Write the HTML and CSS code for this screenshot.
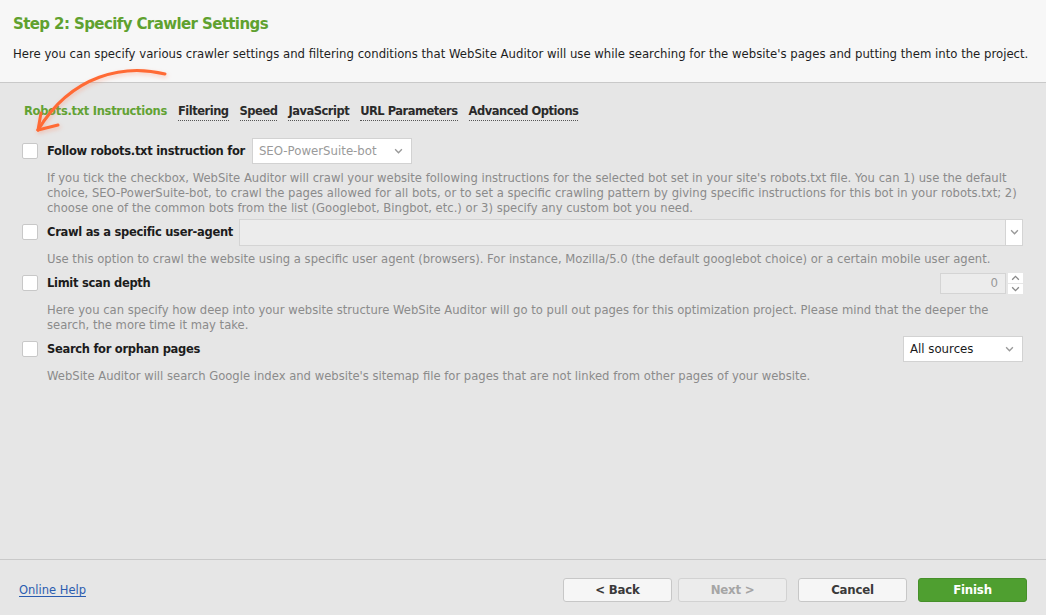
FILE: index.html
```html
<!DOCTYPE html>
<html>
<head>
<meta charset="utf-8">
<link rel="stylesheet" href="styles.css">
</head>
<body>
<div class="window">
  <div class="header">
    <h1 class="title">Step 2: Specify Crawler Settings</h1>
    <p class="intro">Here you can specify various crawler settings and filtering conditions that WebSite Auditor will use while searching for the website's pages and putting them into the project.</p>
  </div>
  <div class="main">
    <div class="tabs">
      <span class="tab active">Robots.txt Instructions</span>
      <span class="tab">Filtering</span>
      <span class="tab">Speed</span>
      <span class="tab">JavaScript</span>
      <span class="tab">URL Parameters</span>
      <span class="tab">Advanced Options</span>
    </div>

    <div class="row">
      <span class="check"></span>
      <span class="label">Follow robots.txt instruction for</span>
      <span class="select bot">SEO-PowerSuite-bot<svg class="chev" viewBox="0 0 8 5"><path d="M1 1l3 3 3-3" /></svg></span>
    </div>
    <p class="desc">If you tick the checkbox, WebSite Auditor will crawl your website following instructions for the selected bot set in your site's robots.txt file. You can 1) use the default choice, SEO-PowerSuite-bot, to crawl the pages allowed for all bots, or to set a specific crawling pattern by giving specific instructions for this bot in your robots.txt; 2) choose one of the common bots from the list (Googlebot, Bingbot, etc.) or 3) specify any custom bot you need.</p>

    <div class="row">
      <span class="check"></span>
      <span class="label">Crawl as a specific user-agent</span>
      <span class="agent"></span>
      <span class="dropbtn"><svg class="chev" viewBox="0 0 8 5"><path d="M1 1l3 3 3-3" /></svg></span>
    </div>
    <p class="desc">Use this option to crawl the website using a specific user agent (browsers). For instance, Mozilla/5.0 (the default googlebot choice) or a certain mobile user agent.</p>

    <div class="row">
      <span class="check"></span>
      <span class="label">Limit scan depth</span>
      <span class="spacer"></span>
      <span class="depth">0</span>
      <span class="spin">
        <svg viewBox="0 0 12 9"><path d="M3 6l3-3 3 3" /></svg>
        <svg viewBox="0 0 12 9"><path d="M3 3l3 3 3-3" /></svg>
      </span>
    </div>
    <p class="desc">Here you can specify how deep into your website structure WebSite Auditor will go to pull out pages for this optimization project. Please mind that the deeper the search, the more time it may take.</p>

    <div class="row">
      <span class="check"></span>
      <span class="label">Search for orphan pages</span>
      <span class="spacer"></span>
      <span class="select sources">All sources<svg class="chev" viewBox="0 0 8 5"><path d="M1 1l3 3 3-3" /></svg></span>
    </div>
    <p class="desc">WebSite Auditor will search Google index and website's sitemap file for pages that are not linked from other pages of your website.</p>
  </div>
  <div class="footer">
    <a class="help" href="#">Online Help</a>
    <div class="buttons">
      <span class="btn">&lt; Back</span>
      <span class="btn disabled">Next &gt;</span>
      <span class="btn cancel">Cancel</span>
      <span class="btn finish">Finish</span>
    </div>
  </div>
  <svg class="arrow" viewBox="0 0 200 150" width="200" height="150">
    <path d="M165 74 C 125 64, 72 74, 38 130" />
    <path d="M38 130 L 58 125" />
    <path d="M38 130 L 41 113" />
  </svg>
</div>
</body>
</html>
```
FILE: styles.css
```css
* { box-sizing: border-box; }
html, body { margin: 0; padding: 0; }
body {
  width: 1046px;
  height: 615px;
  overflow: hidden;
  font-family: "DejaVu Sans", "Liberation Sans", sans-serif;
  color: #222;
  background: #e6e6e6;
}
.window {
  position: relative;
  display: flex;
  flex-direction: column;
  height: 615px;
}
.header {
  height: 83px;
  background: #f7f7f7;
  border-bottom: 1px solid #c9c9c9;
  padding: 13px 13px 0;
}
.title {
  margin: 0;
  font-size: 15px;
  letter-spacing: -0.6px;
  line-height: 22px;
  font-weight: bold;
  color: #5fa12f;
}
.intro {
  margin: 11px 0 0;
  font-size: 11.7px;
  line-height: 16px;
  color: #1e1e1e;
  white-space: nowrap;
}
.main {
  flex: 1;
  padding: 21px 23px 0 22px;
}
.tabs {
  display: flex;
  gap: 11px;
  height: 16px;
  font-size: 11.5px;
  letter-spacing: -0.5px;
  font-weight: bold;
  margin-bottom: 18px;
  padding-left: 2px;
}
.tab {
  color: #2a2a2a;
  border-bottom: 1px dotted #555;
  line-height: 15px;
  height: 17px;
}
.tab.active {
  color: #62a234;
  border-bottom: none;
  letter-spacing: -0.3px;
}
.row {
  display: flex;
  align-items: center;
  height: 26px;
}
.check {
  width: 16px;
  height: 16px;
  background: #fff;
  border: 1px solid #c8c8c8;
  border-radius: 2px;
  margin-right: 9px;
  flex: none;
}
.label {
  font-size: 11.5px;
  letter-spacing: -0.3px;
  font-weight: bold;
  color: #1c1c1c;
  white-space: nowrap;
}
.desc {
  margin: 0;
  padding: 7px 0 3px 25px;
  font-size: 11.6px;
  line-height: 15px;
  color: #8b8b8b;
}
.select {
  display: flex;
  align-items: center;
  justify-content: space-between;
  height: 26px;
  border: 1px solid #d2d2d2;
  background: #fff;
  font-size: 11.75px;
  padding: 0 8px 0 6px;
}
.select.bot {
  width: 160px;
  margin-left: 7px;
  color: #9a9a9a;
}
.select.sources {
  width: 120px;
  color: #1a1a1a;
}
.chev {
  width: 9px;
  height: 6px;
  fill: none;
  stroke: #999;
  stroke-width: 1.2;
}
.agent {
  flex: 1;
  height: 27px;
  margin-left: 6px;
  background: #ececec;
  border: 1px solid #d4d4d4;
}
.dropbtn {
  width: 17px;
  height: 27px;
  background: #fff;
  border: 1px solid #d4d4d4;
  border-left: none;
  display: flex;
  align-items: center;
  justify-content: center;
}
.spacer { flex: 1; }
.depth {
  width: 66px;
  height: 21px;
  background: #ececec;
  border: 1px solid #d4d4d4;
  font-size: 11.75px;
  color: #999;
  text-align: right;
  padding-right: 7px;
  line-height: 19px;
}
.spin {
  display: flex;
  flex-direction: column;
  margin-left: 2px;
  width: 15px;
  gap: 1px;
}
.spin svg {
  width: 15px;
  height: 10px;
  background: #fff;
  fill: none;
  stroke: #888;
  stroke-width: 1.2;
}
.footer {
  height: 56px;
  border-top: 1px solid #c9c9c9;
  display: flex;
  align-items: center;
  justify-content: space-between;
  padding: 5px 19px 0 19px;
}
.help {
  color: #2b5cb0;
  font-size: 11.5px;
  text-decoration: underline;
  text-underline-offset: 2px;
}
.buttons {
  display: flex;
  gap: 11px;
}
.btn {
  width: 109px;
  height: 24px;
  border: 1px solid #c7c7c7;
  border-radius: 3px;
  background: #f6f6f6;
  font-size: 11.75px;
  letter-spacing: -0.2px;
  font-weight: bold;
  color: #3a3a3a;
  display: flex;
  align-items: center;
  justify-content: center;
}
.btn.disabled {
  margin-left: -5px;
  color: #a5a5a5;
  background: #ececec;
  border-color: #d2d2d2;
}
.btn.finish {
  background: #4f9f30;
  border-color: #46902a;
  color: #fff;
}
.arrow {
  position: absolute;
  left: 0;
  top: 0;
  fill: none;
  stroke: #ff6a35;
  stroke-width: 3;
  stroke-linecap: round;
  filter: drop-shadow(1px 2px 2px rgba(255,120,80,0.35));
}
```
